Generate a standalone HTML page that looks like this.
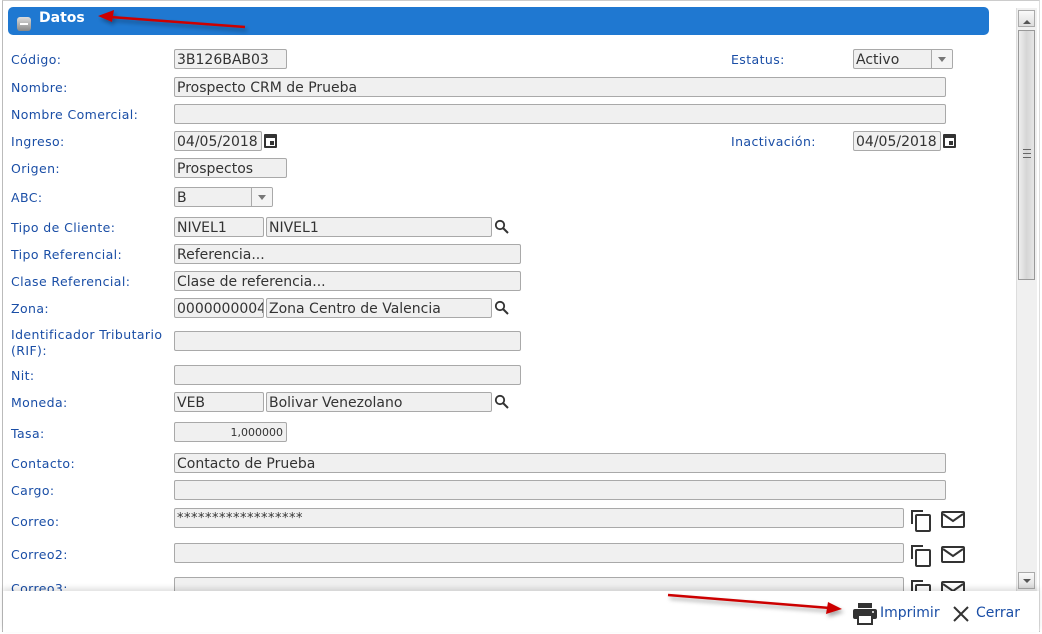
<!DOCTYPE html>
<html><head><meta charset="utf-8"><style>
html,body{margin:0;padding:0;width:1042px;height:634px;overflow:hidden;background:#fff;font-family:"DejaVu Sans","Liberation Sans",sans-serif;}
.a{position:absolute;}
.frame{left:2px;top:0;width:1038px;height:632px;border-left:1px solid #bbb;border-bottom:1px solid #aaa;border-top:1px solid #ccc;border-right:1px solid #ddd;box-sizing:border-box;}
.hdr{left:8px;top:7px;width:981px;height:28px;background:#1f78d1;border-radius:5px;}
.hdr .t{position:absolute;left:31px;top:3px;color:#fff;font-weight:bold;font-size:14px;}
.minus{position:absolute;left:9px;top:10px;width:14px;height:14px;border-radius:3px;background:linear-gradient(#ddd,#888);}
.minus:after{content:"";position:absolute;left:3px;top:6px;width:8px;height:2px;background:#fff;}
.l{position:absolute;left:11px;color:#1a4ea6;font-size:12.5px;line-height:16px;letter-spacing:0.4px;}
.i{position:absolute;height:20px;background:#f0f0f0;border:1px solid #a9a9a9;border-radius:2px;box-sizing:border-box;font-size:14px;line-height:20px;padding-left:2px;color:#333;white-space:nowrap;overflow:hidden;}
.sel:after{content:"";position:absolute;right:0;top:0;width:20px;height:18px;border-left:1px solid #aaa;background:#f4f4f4;}
.sel:before{content:"";position:absolute;right:6px;top:7px;border:4px solid transparent;border-top:5px solid #777;z-index:2;}
.cal{position:absolute;width:13px;height:14px;border:2px solid #333;border-top-width:4px;box-sizing:border-box;border-radius:1px;}
.cal:after{content:"";position:absolute;right:1px;bottom:1px;width:4px;height:4px;background:#333;}
.sb{left:1016px;top:8px;width:20px;height:583px;background:#f0f0f0;border-left:1px solid #ddd;}
.foot{left:3px;top:591px;width:1036px;height:41px;background:#fff;box-shadow:0 -3px 5px rgba(0,0,0,0.12);}
</style></head><body>
<div class="a frame"></div>
<div class="a hdr"><div class="minus"></div><div class="t">Datos</div></div>

<div class="l" style="top:52px">Código:</div><div class="i" style="left:174px;top:49px;width:113px">3B126BAB03</div>
<div class="l" style="top:52px;left:731px">Estatus:</div><div class="i sel" style="left:853px;top:49px;width:100px">Activo</div>
<div class="l" style="top:80px">Nombre:</div><div class="i" style="left:174px;top:77px;width:772px">Prospecto CRM de Prueba</div>
<div class="l" style="top:107px">Nombre Comercial:</div><div class="i" style="left:174px;top:104px;width:772px"></div>
<div class="l" style="top:134px">Ingreso:</div><div class="i" style="left:174px;top:131px;width:88px">04/05/2018</div><div class="cal" style="left:264px;top:134px"></div>
<div class="l" style="top:134px;left:731px">Inactivación:</div><div class="i" style="left:853px;top:131px;width:88px">04/05/2018</div><div class="cal" style="left:943px;top:134px"></div>
<div class="l" style="top:161px">Origen:</div><div class="i" style="left:174px;top:158px;width:113px">Prospectos</div>
<div class="l" style="top:190px">ABC:</div><div class="i sel" style="left:174px;top:187px;width:99px">B</div>
<div class="l" style="top:220px">Tipo de Cliente:</div><div class="i" style="left:174px;top:217px;width:90px">NIVEL1</div><div class="i" style="left:266px;top:217px;width:226px">NIVEL1</div>
<svg class="a" style="left:494px;top:219px" width="16" height="16" viewBox="0 0 16 16"><circle cx="6" cy="6" r="4.2" fill="none" stroke="#333" stroke-width="1.8"/><path d="M9 9l5 5" stroke="#333" stroke-width="2"/></svg>
<div class="l" style="top:247px">Tipo Referencial:</div><div class="i" style="left:174px;top:244px;width:347px">Referencia...</div>
<div class="l" style="top:274px">Clase Referencial:</div><div class="i" style="left:174px;top:271px;width:347px">Clase de referencia...</div>
<div class="l" style="top:301px">Zona:</div><div class="i" style="left:174px;top:298px;width:90px">0000000004</div><div class="i" style="left:266px;top:298px;width:226px">Zona Centro de Valencia</div>
<svg class="a" style="left:494px;top:300px" width="16" height="16" viewBox="0 0 16 16"><circle cx="6" cy="6" r="4.2" fill="none" stroke="#333" stroke-width="1.8"/><path d="M9 9l5 5" stroke="#333" stroke-width="2"/></svg>
<div class="l" style="top:327px">Identificador Tributario<br>(RIF):</div><div class="i" style="left:174px;top:331px;width:347px"></div>
<div class="l" style="top:368px">Nit:</div><div class="i" style="left:174px;top:365px;width:347px"></div>
<div class="l" style="top:395px">Moneda:</div><div class="i" style="left:174px;top:392px;width:90px">VEB</div><div class="i" style="left:266px;top:392px;width:226px">Bolivar Venezolano</div>
<svg class="a" style="left:494px;top:394px" width="16" height="16" viewBox="0 0 16 16"><circle cx="6" cy="6" r="4.2" fill="none" stroke="#333" stroke-width="1.8"/><path d="M9 9l5 5" stroke="#333" stroke-width="2"/></svg>
<div class="l" style="top:426px">Tasa:</div><div class="i" style="left:174px;top:422px;width:113px;font-size:11px;text-align:right;padding-right:3px">1,000000</div>
<div class="l" style="top:456px">Contacto:</div><div class="i" style="left:174px;top:453px;width:772px">Contacto de Prueba</div>
<div class="l" style="top:483px">Cargo:</div><div class="i" style="left:174px;top:480px;width:772px"></div>
<div class="l" style="top:514px">Correo:</div><div class="i" style="left:174px;top:508px;width:730px;font-size:13px;letter-spacing:0.5px">******************</div>
<div class="l" style="top:547px">Correo2:</div><div class="i" style="left:174px;top:543px;width:730px"></div>
<div class="l" style="top:581px">Correo3:</div><div class="i" style="left:174px;top:577px;width:730px"></div>
<svg class="a" style="left:910px;top:508px" width="60" height="100" viewBox="0 0 60 100">
<g fill="none" stroke="#333" stroke-width="2">
<path d="M2 16V3h11"/><rect x="6" y="7" width="14" height="16" rx="1"/><rect x="32" y="4" width="22" height="15" rx="1"/><path d="M33 6l10 7 10-7"/>
<path d="M2 51V38h11"/><rect x="6" y="42" width="14" height="16" rx="1"/><rect x="32" y="39" width="22" height="15" rx="1"/><path d="M33 41l10 7 10-7"/>
<path d="M2 86V73h11"/><rect x="6" y="77" width="14" height="16" rx="1"/><rect x="32" y="74" width="22" height="15" rx="1"/><path d="M33 76l10 7 10-7"/>
</g></svg>

<div class="a sb">
<div class="a" style="left:1px;top:2px;width:17px;height:17px;border:1px solid #aaa;background:linear-gradient(#fafafa,#ddd);box-sizing:border-box"><div style="position:absolute;left:4px;top:5px;border:4px solid transparent;border-bottom:4px solid #555"></div></div>
<div class="a" style="left:1px;top:22px;width:17px;height:250px;border:1px solid #999;background:linear-gradient(90deg,#eee,#d6d6d6 50%,#e6e6e6);box-sizing:border-box"><div style="position:absolute;left:4px;top:118px;width:8px;height:7px;border-top:1px solid #666;border-bottom:1px solid #666"><div style="margin-top:3px;border-top:1px solid #666"></div></div></div>
<div class="a" style="left:1px;top:564px;width:17px;height:17px;border:1px solid #aaa;background:linear-gradient(#fafafa,#ddd);box-sizing:border-box"><div style="position:absolute;left:4px;top:6px;border:4px solid transparent;border-top:4px solid #555"></div></div>
</div>

<div class="a foot">
<svg class="a" style="left:849px;top:12px" width="26" height="22" viewBox="0 0 26 22"><rect x="6" y="0" width="14" height="5" fill="#333"/><rect x="1" y="6" width="24" height="10" rx="2" fill="#333"/><rect x="6" y="12" width="14" height="9" fill="#fff" stroke="#333" stroke-width="2"/><circle cx="21" cy="9" r="1" fill="#fff"/></svg>
<div class="a" style="left:877px;top:14px;color:#1a4ea6;font-size:14px">Imprimir</div>
<svg class="a" style="left:949px;top:14px" width="18" height="18" viewBox="0 0 18 18"><path d="M2 2l14 14M16 2L2 16" stroke="#333" stroke-width="2"/></svg>
<div class="a" style="left:973px;top:14px;color:#1a4ea6;font-size:14px">Cerrar</div>
</div>

<svg class="a" style="left:0;top:0" width="1042" height="634">
<defs><filter id="s"><feDropShadow dx="2" dy="3" stdDeviation="2" flood-opacity="0.35"/></filter></defs>
<g filter="url(#s)" fill="#c00" stroke="#c00">
<path d="M245 27L110 17" stroke-width="2.5"/><path d="M98 16l16-6-2 12z" stroke="none"/>
<path d="M668 595L830 608" stroke-width="2.5"/><path d="M842 609l-16 5 2-12z" stroke="none"/>
</g></svg>
</body></html>
